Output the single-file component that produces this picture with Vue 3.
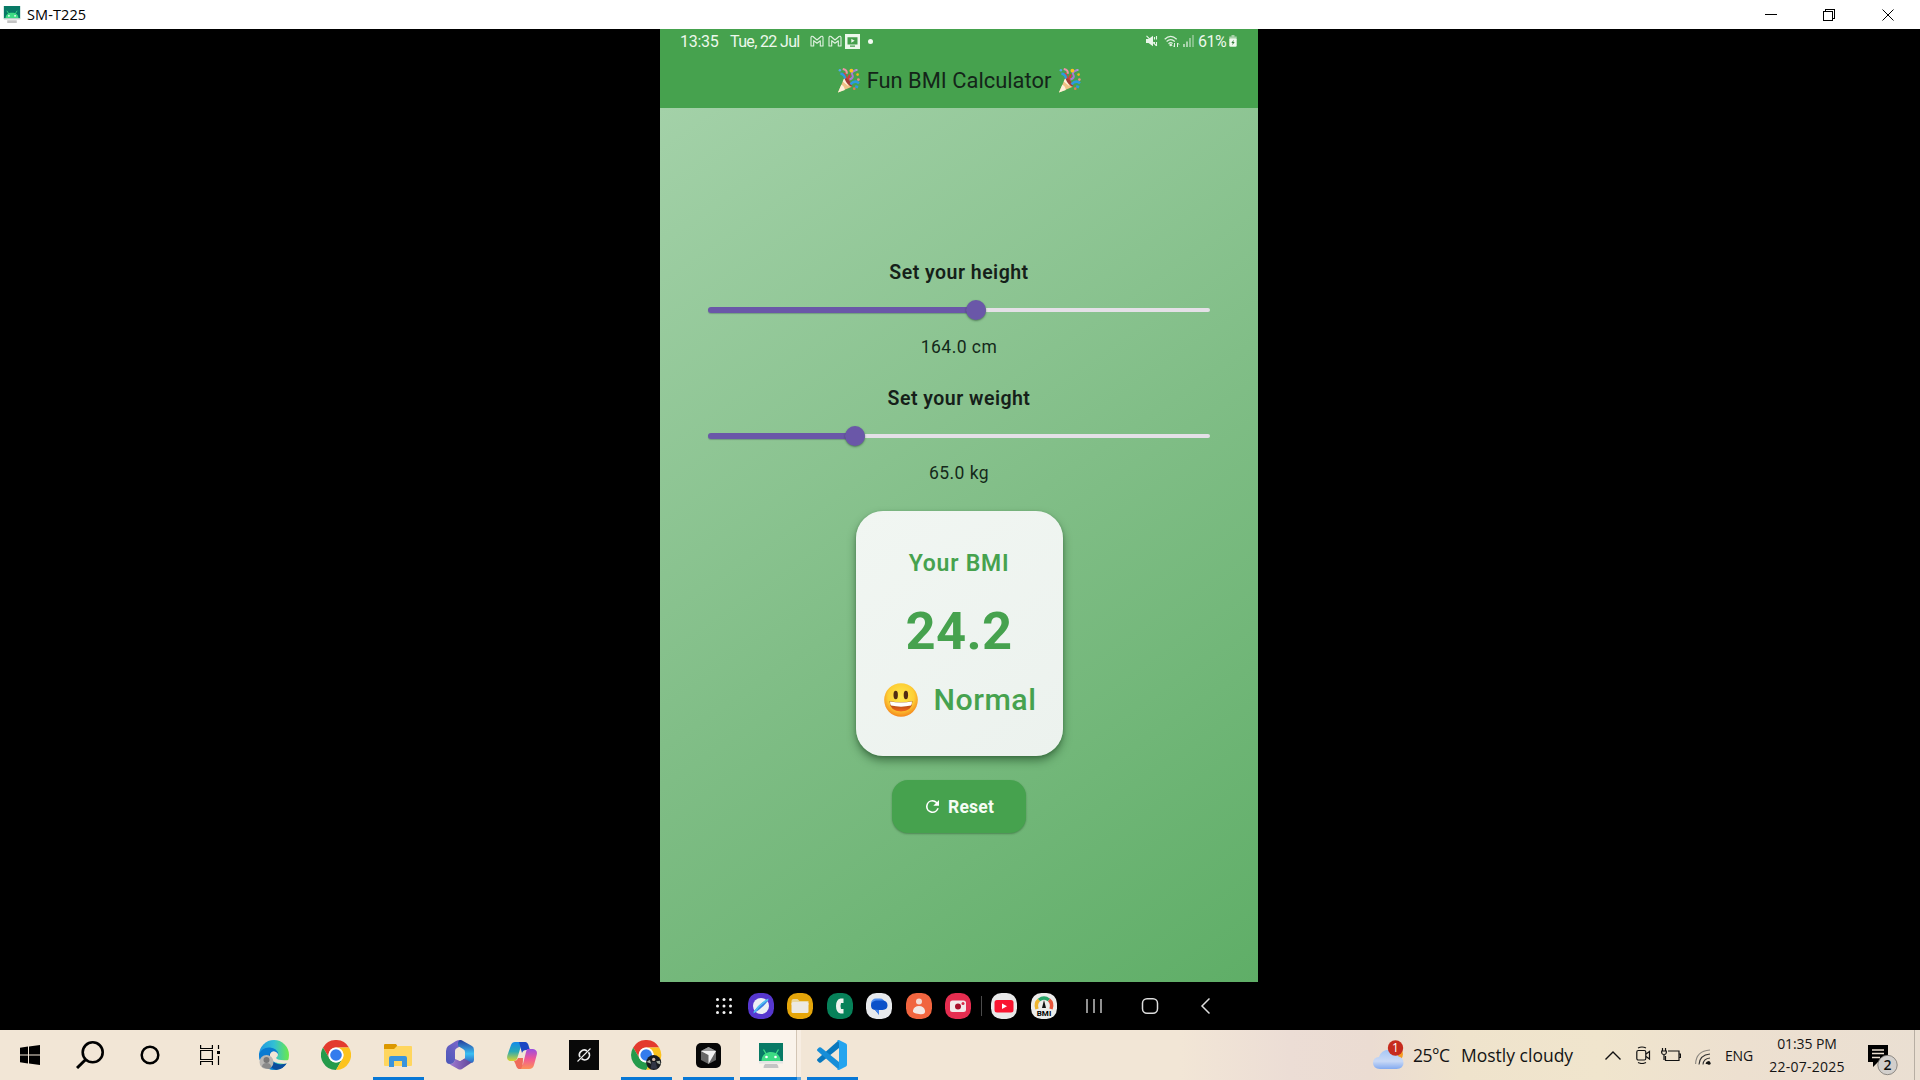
<script setup>
const sliders = [
  { label: 'Set your height', value: '164.0 cm', fill: 267.5, cls: 'height' },
  { label: 'Set your weight', value: '65.0 kg', fill: 147, cls: 'weight' },
]
</script>

<template>
  <div class="desktop">
    <header class="titlebar">
      <svg class="app-icon" width="18" height="17" viewBox="0 0 24 25">
        <path fill="#087a66" d="M0 0h24v19H0z" />
        <path fill="#3ddc84" d="M2.500 18c0-5 3.500-8 9.500-8s9.500 3 9.500 8z" />
        <path stroke="#3ddc84" stroke-width="1.300" d="M4.500 7l3 5M19.500 7l-3 5" />
        <circle cx="7.500" cy="14.500" r="1.300" fill="#fff" /><circle cx="16.500" cy="14.500" r="1.300" fill="#fff" />
        <path fill="#e4e4e4" d="M0 18h24v2.500H0z" /><path fill="#c4c4c4" d="M5 21h14v4H5z" />
      </svg>
      <span class="window-title">SM-T225</span>
      <svg class="controls" width="130" height="14" viewBox="0 0 130 14" fill="none" stroke="#000" stroke-width="1" shape-rendering="crispEdges">
        <path d="M0 6.500h12" />
        <path d="M58.500 3.500h9v9h-9zM60.500 3.500v-2h9v9h-2" />
        <path d="M117.500 1.500l11 11M128.500 1.500l-11 11" shape-rendering="auto" />
      </svg>
    </header>

    <main class="stage">
      <section class="phone">
        <div class="appbar">
          <div class="status">
            <span class="time">13:35</span>
            <span class="date">Tue, 22 Jul</span>
            <svg class="gmail" width="14" height="12" viewBox="0 0 14 12" fill="none" stroke="#e2f2e2" stroke-width="1.100" stroke-linejoin="round">
              <path d="M1 11V2.300Q1.500.8 3 1.500L7 5l4-3.500q1.500-.7 2 .8V11h-2.700V5.700L7 8.300 3.700 5.700V11z" />
            </svg>
            <svg class="gmail" width="14" height="12" viewBox="0 0 14 12" fill="none" stroke="#e2f2e2" stroke-width="1.100" stroke-linejoin="round">
              <path d="M1 11V2.300Q1.500.8 3 1.500L7 5l4-3.500q1.500-.7 2 .8V11h-2.700V5.700L7 8.300 3.700 5.700V11z" />
            </svg>
            <svg class="cast" width="15" height="15" viewBox="0 0 15 15">
              <path fill="#edf8ec" d="M0 0h15v15H0z" /><path fill="#459f4c" d="M2.500 3.200h10v7.200h-10zM5 11.500h5v1.300H5z" /><path fill="#edf8ec" d="M6.300 4.800l3.300 2-3.300 2z" />
            </svg>
            <i class="dot"></i>
            <svg class="mute" width="12" height="12" viewBox="0 0 12 12">
              <path fill="#eaf6ea" d="M0 4h2.500L7 .7v10.600L2.500 8H0z" /><path stroke="#eaf6ea" stroke-width="1.100" fill="none" d="M.5.8l10 10M8.500 2v2.500M8.500 7v2M10.500 1v3.500M10.500 7v4" />
            </svg>
            <svg class="wifi" width="16" height="13" viewBox="0 0 16 13" fill="none" stroke="#e2f2e2" stroke-width="1.200">
              <path d="M.7 4.200Q6.700-1.500 12.700 4.200M2.600 6.500Q6.700 2.700 10.800 6.500M4.500 8.700Q6.700 6.700 8.600 8.500" /><circle cx="6.700" cy="10" r=".7" fill="#e2f2e2" /><path d="M10.500 8v4M9 10.500l1.500 1.500M13.500 12V8M15 9.500L13.500 8" stroke-width="1" />
            </svg>
            <svg class="signal" width="11" height="12" viewBox="0 0 11 12" stroke="#e2f2e2" stroke-width="1.300">
              <path d="M1 12V9" /><path d="M4 12V6.500" /><path d="M7 12V3" opacity=".75" /><path d="M10 12V0" opacity=".6" />
            </svg>
            <span class="percent">61%</span>
            <svg class="cell-battery" width="8" height="12" viewBox="0 0 8 12">
              <path fill="#a8d1a9" d="M2.500 0h3v1.500h2.200V5H.3V1.500h2.200z" /><rect x=".3" y="3.500" width="7.400" height="8.300" rx="1.200" fill="#f1faf0" /><path fill="#357d3b" d="M4.700 4.800L2.300 8h1.400L3.300 10.300 5.700 7H4.300z" />
            </svg>
          </div>
          <h1 class="heading">
            <svg v-for="n in 2" :key="n" :class="'party p' + n" width="23" height="25" viewBox="0 0 24 26">
              <path fill="#f0c287" d="M1 25.500L8 9.500q6 2 7.500 10z" /><path fill="#fff0d8" d="M1 25.500l3.500-8q3 1 3.700 5.300zM6 14l2-4.500 4 9.500z" />
              <path fill="#a23b35" d="M8 8.500q4 .5 8 10.500-1.500 1.500-5-2.500-4-5-3-8z" />
              <path fill="none" stroke="#d63d3b" stroke-width="2.600" d="M9.500 11l-2-6M12 12q.5-5 2-4" />
              <path fill="none" stroke="#a77bd7" stroke-width="2.100" d="M13 12q5-2 3-5t4-5" />
              <path fill="none" stroke="#2c9ae0" stroke-width="2.600" d="M3.500 6q4 0 5 5M14 17q5-5 9-1M19 19l3 1" />
              <path fill="none" stroke="#f093a7" stroke-width="2.200" d="M6 1q5 1 4 5" />
              <circle cx="15" cy="2.700" r="2" fill="#ffc31c" /><circle cx="3" cy="2.300" r="1.300" fill="#52a7ee" /><circle cx="21.500" cy="6.800" r="1.400" fill="#f1b31d" /><circle cx="22.300" cy="12" r="1.400" fill="#ef8b91" /><circle cx="18" cy="21.500" r="1.400" fill="#df7d55" /><circle cx="20.500" cy="2" r="1.100" fill="#b59ae4" />
            </svg>
            <span>Fun BMI Calculator</span>
          </h1>
        </div>

        <div class="body">
          <div v-for="s in sliders" :key="s.label" class="field">
            <div :class="['label', s.cls]">{{ s.label }}</div>
            <div class="slider">
              <div class="active" :style="{ width: s.fill + 'px' }"></div>
              <div class="thumb"></div>
              <div class="rest"></div>
            </div>
            <div class="value">{{ s.value }}</div>
          </div>

          <div class="card">
            <div class="card-title">Your BMI</div>
            <div class="bmi">24.2</div>
            <div class="verdict">
              <svg width="34" height="34" viewBox="0 0 34 34">
                <defs>
                  <radialGradient id="face" cx=".5" cy=".4" r=".6"><stop offset="0" stop-color="#ffe94e" /><stop offset=".65" stop-color="#fdcf35" /><stop offset="1" stop-color="#f5861c" /></radialGradient>
                  <linearGradient id="mouth" x2="0" y2="1"><stop offset="0" stop-color="#8d3b12" /><stop offset="1" stop-color="#f5671f" /></linearGradient>
                </defs>
                <circle cx="17" cy="17" r="16.800" fill="url(#face)" />
                <ellipse cx="11.700" cy="12" rx="2.200" ry="4.200" fill="#512c13" /><ellipse cx="21.900" cy="12" rx="2.200" ry="4.200" fill="#512c13" />
                <path fill="url(#mouth)" d="M5.500 18.300Q17 20.500 28.500 18.300 28 28.500 17 28.500T5.500 18.300z" />
                <path fill="#fff" d="M6 18.500Q17 20.500 28 18.500q0 3-1 4-10 2.300-20 0-1-1-1-4z" />
              </svg>
              <span>Normal</span>
            </div>
          </div>

          <button class="reset">
            <svg width="13" height="13" viewBox="4 4 16 16"><path fill="#fff" d="M17.650 6.350A7.960 7.960 0 0 0 12 4a8 8 0 1 0 7.730 10h-2.080A6 6 0 1 1 12 6c1.660 0 3.140.69 4.220 1.780L13 11h7V4z" /></svg>
            <span>Reset</span>
          </button>
        </div>
      </section>

      <nav class="dock">
        <svg class="apps" width="18" height="18" viewBox="0 0 18 18" fill="#f2f2f2">
          <circle v-for="n in 9" :key="n" :cx="2.500 + ((n - 1) % 3) * 6.500" :cy="2.500 + Math.floor((n - 1) / 3) * 6.500" r="1.500" />
        </svg>
        <svg width="26" height="26" viewBox="0 0 26 26"><rect width="26" height="26" rx="10.500" fill="#5637cf" /><circle cx="13" cy="13" r="8" fill="#edf0f4" /><path d="M4.500 21Q10 11 21.500 5 17 14 4.500 21" fill="#3a7de3" /><path d="M6 19.500Q12 11 20 6.500" stroke="#53c3f2" stroke-width="1.600" fill="none" /></svg>
        <svg width="26" height="26" viewBox="0 0 26 26"><rect width="26" height="26" rx="10.500" fill="#e5a50a" /><path fill="#e9d7a0" d="M4.500 8q0-2 2-2h4l2 2h9v4h-17z" /><rect x="4.500" y="9" width="17" height="11" rx="1.500" fill="#ece9e3" /></svg>
        <svg width="26" height="26" viewBox="0 0 26 26"><rect width="26" height="26" rx="10.500" fill="#078159" /><path fill="#f0f3ef" d="M16.500 5.500v4.500h-2.500q-1 3 0 6h2.500v4.500h-3Q9 19.500 9 13t4.500-7.500z" /></svg>
        <svg width="26" height="26" viewBox="0 0 26 26"><rect width="26" height="26" rx="10.500" fill="#e7e9ec" /><rect x="5" y="5.500" width="14" height="10" rx="5" fill="#4c8df1" /><path fill="#0b51c9" d="M10 7.500h7q4.500.5 4.500 5 0 4.200-5 4.500h-3.500v4.500L9 17q-4-.5-4-4.500t5-5z" /><path fill="#4080e9" d="M9 16.500l4 .5v5z" /></svg>
        <svg width="26" height="26" viewBox="0 0 26 26"><rect width="26" height="26" rx="10.500" fill="#f1653f" /><circle cx="13" cy="8.500" r="3" fill="#f5dcd5" /><path fill="#f2e8e5" d="M7 17.500q1-4.500 6-4.500t6 4.500-6 3.500-6-3.500z" /></svg>
        <svg width="26" height="26" viewBox="0 0 26 26"><rect width="26" height="26" rx="10.500" fill="#e52d50" /><rect x="5" y="7.500" width="16" height="11.500" rx="2.500" fill="#f3e9ea" /><circle cx="13" cy="13.500" r="3" fill="#a90f2b" /><circle cx="18" cy="10.500" r="1.500" fill="#d62a47" /></svg>
        <i class="divider"></i>
        <svg width="26" height="26" viewBox="0 0 26 26"><rect width="26" height="26" rx="10.500" fill="#e9e9e9" /><rect x="3.500" y="7" width="19" height="12.500" rx="2.500" fill="#fa1530" /><path fill="#fff" d="M11 10.500l5 2.700-5 2.700z" /></svg>
        <svg width="26" height="26" viewBox="0 0 26 26"><rect width="26" height="26" rx="10.500" fill="#ededeb" /><g fill="none" stroke-width="3.500"><path d="M6 16Q4 10 8 7" stroke="#efb52f" /><path d="M8 7q5-4 10 0" stroke="#27a568" /><path d="M18 7q4 3 2 9" stroke="#e7563b" /></g><path d="M13 7l2 8h-4z" fill="#111" /><text x="13" y="22.800" text-anchor="middle" class="bmi-icon-text">BMI</text></svg>
        <svg class="keys" width="124" height="18" viewBox="0 0 124 18" fill="none" stroke="#dedede" stroke-width="1.500">
          <path d="M1 2v14M8 2v14M15 2v14" stroke-width="1.300" /><rect x="56.500" y="1.700" width="15" height="14.600" rx="4.500" /><path d="M123.500 1.500l-7.500 7.500 7.500 7.500" />
        </svg>
      </nav>
    </main>

    <footer class="taskbar">
      <div class="sys"><svg width="20" height="20" viewBox="0 0 20 20"><path d="M0 2.700L8 1.600v7.900H0zM9 1.400L20 0v9.500H9zM0 10.500h8v7.900L0 17.300zM9 10.500h11V20L9 18.600z" /></svg></div>
      <div class="sys"><svg width="28" height="28" viewBox="0 0 28 28" fill="none" stroke="#000" stroke-width="2.600"><circle cx="16.700" cy="11.300" r="10" /><path d="M9.700 18.500L1 27" stroke-width="3" /></svg></div>
      <div class="sys"><svg width="20" height="20" viewBox="0 0 20 20"><circle cx="10" cy="10" r="8.300" fill="none" stroke="#000" stroke-width="2.500" /></svg></div>
      <div class="sys"><svg width="20" height="20" viewBox="0 0 20 20" fill="none" stroke="#000" stroke-width="1.200"><path d="M.6 0v3.500h11.800V0M.6 5.500h11.800v9H.6zM.6 20v-3.500h11.800V20M18.500 0v4M18.500 11v9" /><path d="M17 6h3v3h-3z" fill="#000" stroke="none" /></svg></div>

      <div class="task first">
        <svg width="30" height="30" viewBox="0 0 30 30"><defs><linearGradient id="eg"><stop stop-color="#2096df" /><stop offset=".5" stop-color="#32bfd5" /><stop offset="1" stop-color="#6bea4a" /></linearGradient></defs><circle cx="15" cy="15" r="15" fill="url(#eg)" /><path fill="#087ad1" d="M0 14Q3 7 11 7.500q7 .5 8.500 7l-6-2Q9 17 16 23q6 3 12 0-5 8-16 6.500Q0 27 0 14z" /><path fill="#0b4d9d" d="M11 13q-1 7 5 10t12-.5Q25 29 17 30 7 27 11 13z" /><path fill="#f2e6d6" d="M11 14q2-4 6-2t0 6q2 3 13 2 0 2-2 3.500-13 1-17-5z" /><circle cx="7.500" cy="22" r="7" fill="#b8b6b3" /><circle cx="7.500" cy="20" r="3" fill="#777" /><path fill="#8a8a8a" d="M3 27q0-4 4.500-4t4.500 4-9 0" /></svg>
      </div>
      <div class="task"><svg width="30" height="30" viewBox="0 0 48 48"><path fill="#e33b2e" d="M3.200 12A24 24 0 0 1 44.800 12H24a12 12 0 0 0-10.400 18z" /><path fill="#259b4b" d="M3.200 12A24 24 0 0 0 24 48l10.400-18a12 12 0 0 1-20.800 0z" /><path fill="#fcc31e" d="M44.800 12A24 24 0 0 1 24 48l10.400-18A12 12 0 0 0 24 12z" /><circle cx="24" cy="24" r="12" fill="#fff" /><circle cx="24" cy="24" r="9.300" fill="#347ced" /></svg></div>
      <div class="task run"><svg class="folder" width="28" height="24" viewBox="0 0 28 24"><path fill="#dc9800" d="M0 1q0-1 1-1h11l2 3-3 3H0z" /><path fill="#ffd65e" d="M0 5h10l3-3h14q1 0 1 1v18q0 1-1 1H1q-1 0-1-1z" /><path fill="#3a94dc" d="M5 23V14q0-2 2-2h14q2 0 2 2v9h-5v-6h-8v6z" /></svg></div>
      <div class="task"><svg width="28" height="30" viewBox="0 0 28 30"><defs><linearGradient id="o1" x1="0" y1="1" x2="1" y2="0"><stop stop-color="#4a57b8" /><stop offset="1" stop-color="#8368cc" /></linearGradient><linearGradient id="o2" x2="0" y2="1"><stop stop-color="#253c9b" /><stop offset=".6" stop-color="#3bbff2" /><stop offset="1" stop-color="#2f62c0" /></linearGradient><linearGradient id="o3"><stop stop-color="#a97fd8" /><stop offset="1" stop-color="#5b4394" /></linearGradient></defs><path fill="url(#o3)" d="M1 22q1 3 4 2 4-1 4-5l5 2 5-3 8 2q0 2-2 3l-9 6q-2 1-4 0l-9-5q-2-1-2-2z" /><path fill="url(#o1)" d="M14 0q-2 0-4 1L2 6Q0 8 0 11v9q0 4 4 4t5-4v-9q0-2 2-3l6-3V2z" /><path fill="url(#o2)" d="M14 0q2 0 3 1l9 5q2 1 2 4v10q0 2-2 3l-7-4v-7q0-2-2-3l-5-3V3q0-2 2-3z" /><path fill="#f2e6d6" d="M14 9.500l5 3v5.500l-5 3-5-3v-5.500z" /></svg></div>
      <div class="task"><svg class="copilot" width="30" height="28" viewBox="0 0 30 28"><defs><linearGradient id="c1" x2="0" y2="1"><stop stop-color="#138bea" /><stop offset=".5" stop-color="#28a9b5" /><stop offset="1" stop-color="#dbd52e" /></linearGradient><linearGradient id="c2" x2="0" y2="1"><stop stop-color="#9a4de1" /><stop offset=".5" stop-color="#f15896" /><stop offset="1" stop-color="#fc9256" /></linearGradient></defs><path fill="url(#c1)" d="M8 1h11l-5 4-4 13q-1 2-3 2H3q-4-1-2.500-6L4 4q1-3 4-3z" /><path fill="#1b47c3" d="M12 1h6q3 0 4 5l1 3h-4q-3 0-4 3z" /><path fill="url(#c2)" d="M20 8h6q5 1 3.700 6L27 24q-1 4-5 4H11l5-5 3-12z" /><path fill="#ef6b5a" d="M11 17h5q0 8-2 11-4 1-5.500-5L7 20q3 0 4-3z" /></svg></div>
      <div class="task"><svg width="30" height="30" viewBox="0 0 30 30"><path fill="#090909" d="M0 0h30v30H0z" /><g fill="none" stroke="#eee" stroke-width="1.700"><path d="M18 11a4.800 4.800 0 0 0-7 6.200M12.500 18.700a4.800 4.800 0 0 0 7-6.500" /><path d="M8.500 21.500L21.500 8.500" stroke-width="1.100" /></g></svg></div>
      <div class="task run"><svg width="31" height="30" viewBox="0 0 49 48"><path fill="#e33b2e" d="M3.200 12A24 24 0 0 1 44.800 12H24a12 12 0 0 0-10.400 18z" /><path fill="#259b4b" d="M3.200 12A24 24 0 0 0 24 48l10.400-18a12 12 0 0 1-20.800 0z" /><path fill="#fcc31e" d="M44.800 12A24 24 0 0 1 24 48l10.400-18A12 12 0 0 0 24 12z" /><circle cx="24" cy="24" r="12" fill="#fff" /><circle cx="24" cy="24" r="9.300" fill="#347ced" /><circle cx="36" cy="36" r="12" fill="#191b1f" /><path fill="#a7afa2" d="M25 35q2-2 5-3l2 6zM40 34l6-1 1 6-5-2z" /><circle cx="36" cy="31" r="2.700" fill="#d2b7a6" /><path fill="#323645" d="M31 46l2-11h6l3 11z" /></svg></div>
      <div class="task run"><svg width="25" height="25" viewBox="0 0 25 25"><rect width="25" height="25" rx="5" fill="#070707" /><path fill="#666" d="M12.500 4l7.500 4v9l-7.500 4L5 17V8z" /><path fill="#999" d="M5 8l7.500-4L20 8l-7.500 4z" /><path fill="#f2f2f2" d="M5 8h15l-7.500 13v-9z" /></svg></div>
      <div class="task current"><svg width="24" height="25" viewBox="0 0 24 25">
        <path fill="#087a66" d="M0 0h24v19H0z" /><path fill="#3ddc84" d="M2.500 18c0-5 3.500-9 9.500-9s9.500 4 9.500 9z" /><path stroke="#3ddc84" stroke-width="1.300" d="M4.500 6.500l3 5M19.500 6.500l-3 5" /><circle cx="7.500" cy="14" r="1.300" fill="#fff" /><circle cx="16.500" cy="14" r="1.300" fill="#fff" /><path fill="#e4e4e4" d="M0 18h24v2.500H0z" /><path fill="#c4c4c4" d="M6 21h12q1.500 1.500 1.500 4h-15Q4.500 22.500 6 21z" />
      </svg></div>
      <div class="task run"><svg width="30" height="30" viewBox="0 0 30 30"><path fill="#0878be" d="M22 0v8L4 22.500q-1 .7-2 0L.5 21q-1-1 0-2z" /><path fill="#168ed8" d="M22 30v-8L4 7.500q-1-.7-2 0L.5 9q-1 1 0 2z" /><path fill="#24a4ef" d="M22 0l7 3.500q1 .5 1 2v19q0 1.500-1 2L22 30q-1.500 0-2-1 2 0 2-2V3q0-2-2-2 .5-1 2-1z" /></svg></div>

      <div class="tray">
        <svg class="weather" width="31" height="30" viewBox="0 0 31 30"><defs><linearGradient id="cl" x2="0" y2="1"><stop stop-color="#a5c6f5" /><stop offset=".6" stop-color="#c9d9f6" /><stop offset="1" stop-color="#83aaf0" /></linearGradient></defs><circle cx="23" cy="14" r="7" fill="#f59b21" /><path fill="url(#cl)" d="M7 29q-7-.5-7-6t6-6q2-7 10-7.500t9.500 7q5 1 5 6.500t-7 6z" /><circle cx="22.500" cy="8" r="7.700" fill="#c62b1e" /><text x="22.500" y="12.300" text-anchor="middle" class="alert-text">1</text></svg>
        <span class="temp">25°C</span><span class="cloudy">Mostly cloudy</span>
        <svg class="caret" width="16" height="9" viewBox="0 0 16 9" fill="none" stroke="#111" stroke-width="1.400"><path d="M.5 8.500L8 1l7.500 7.500" /></svg>
        <svg class="cam" width="15" height="18" viewBox="0 0 15 18" fill="none" stroke="#111" stroke-width="1.200"><rect x=".8" y="4.500" width="9" height="9.500" rx="1.500" /><path d="M10 8l3.500-2.500v7.500L10 10.500M2 2Q6 0 10 2M2 16.500q4 2 8 0" /></svg>
        <svg class="battery" width="20" height="14" viewBox="0 0 20 14" fill="none" stroke="#111" stroke-width="1.200"><path d="M7 3h11v9.500H4.500V8M18.500 6h1v3.500h-1M1.500 0v3M4.500 0v3M.7 3h4.600v2Q5 6.500 3 6.500T.7 5zM3 6.500V12" /></svg>
        <svg class="net" width="16" height="16" viewBox="0 0 16 16" fill="none" stroke="#333" stroke-width="1.100"><path d="M.6 15Q1 2 15 1" stroke="#8b8780" /><path d="M4 15.500Q4.500 6 15 5M8 15.500Q8.500 9.500 15 9" /><path d="M11.500 15q.5-2 3-2" stroke="#111" stroke-width="2" /><circle cx="14" cy="14.200" r="1.600" fill="#111" stroke="none" /></svg>
        <span class="lang">ENG</span>
        <div class="clock"><span class="hour">01:35 PM</span><span class="day">22-07-2025</span></div>
        <svg class="notice" width="31" height="32" viewBox="0 0 31 32"><path d="M0 0h20v17H10l-5 5v-5H0z" /><path stroke="#eee2d2" stroke-width="1.300" d="M4 5h12M4 8.500h12M4 12.500h8" /><circle cx="19.500" cy="20" r="9.700" fill="#d2cfcc" stroke="#77736e" stroke-width=".8" /><text x="19.500" y="25.300" text-anchor="middle" class="count-text">2</text></svg>
        <i class="peek"></i>
      </div>
    </footer>
  </div>
</template>

<style>
body { margin: 0; overflow: hidden; background: #000; }
</style>

<style scoped>
* { box-sizing: border-box; }
.desktop { width: 1920px; height: 1080px; display: flex; flex-direction: column; background: #000; font-family: "Open Sans", "Noto Sans", sans-serif; color: #111; }
svg { display: block; flex: none; }
span { white-space: nowrap; }
.titlebar { height: 29px; flex: none; background: #fff; display: flex; align-items: center; }
.app-icon { margin-left: 3px; }
.window-title { margin-left: 6px; font-size: 14.500px; letter-spacing: .1px; color: #000; }
.controls { margin-left: auto; margin-right: 25px; }
.stage { height: 1001px; flex: none; display: flex; flex-direction: column; align-items: center; background: #000; }
.phone { width: 598px; height: 953px; margin-right: 2px; flex: none; display: flex; flex-direction: column; font-family: Roboto, sans-serif; }
.appbar { height: 79px; flex: none; background: #46a24e; }
.status { height: 24px; display: flex; align-items: center; color: #edf8ec; font-size: 16px; font-family: Roboto, sans-serif; }
.time { margin-left: 20px; width: 50px; letter-spacing: -.3px; }
.date { width: 80px; letter-spacing: -.65px; }
.gmail { margin-right: 4px; }
.cast { margin-left: -1px; }
.dot { width: 5px; height: 5px; border-radius: 50%; background: #f4fbf3; margin-left: 8px; margin-right: auto; }
.wifi { margin-left: 6px; }
.signal { margin-left: 3px; }
.percent { margin-left: 4px; width: 30px; letter-spacing: -.5px; }
.cell-battery { margin-left: 1px; margin-right: 21px; }
.heading { margin: 0; height: 55px; display: flex; align-items: center; justify-content: center; gap: 7px; font-size: 21.900px; font-weight: 400; color: #142519; }
.heading .p1 { order: 0; }
.heading span { order: 1; }
.heading .p2 { order: 2; }
.body { flex: 1; display: flex; flex-direction: column; align-items: center; padding-top: 150px; background: linear-gradient(145.700deg, #a3d1a8 0%, #81be87 50%, #5fae67 100%); }
.field { width: 502px; height: 126px; flex: none; display: flex; flex-direction: column; align-items: center; }
.label { height: 28px; line-height: 30px; font-size: 19.500px; font-weight: 600; letter-spacing: .48px; color: #152019; }
.slider { width: 502px; height: 20px; margin-top: 14px; display: flex; align-items: center; }
.active { height: 6px; flex: none; border-radius: 3px 0 0 3px; background: #6a57a8; margin-right: -10px; box-shadow: 0 1px 1px rgba(40, 60, 70, .3); }
.thumb { width: 20px; height: 20px; flex: none; border-radius: 50%; background: #6a57a8; box-shadow: 0 1px 2px rgba(20, 50, 30, .5); z-index: 1; }
.rest { height: 4px; flex: 1; border-radius: 0 2px 2px 0; background: #e4e0e7; }
.value { height: 24px; line-height: 25px; margin-top: 15px; font-size: 17.500px; letter-spacing: .45px; color: #14291a; }
.card { width: 207px; height: 245px; flex: none; margin-top: 1px; border-radius: 27px; background: linear-gradient(145deg, #f1f6f2, #ecf2ee); box-shadow: 0 5px 9px rgba(20, 60, 25, .5), 0 1px 3px rgba(20, 60, 25, .25); display: flex; flex-direction: column; align-items: center; color: #46a24e; }
.card-title { margin-top: 39px; height: 28px; line-height: 28px; font-size: 23px; font-weight: 600; letter-spacing: .75px; }
.bmi { margin-top: 21px; height: 64px; line-height: 64px; font-size: 52.500px; font-weight: 700; letter-spacing: .3px; }
.verdict { margin-top: 16px; height: 42px; padding-left: 2px; display: flex; align-items: center; gap: 16px; font-size: 30.300px; line-height: 40px; font-weight: 500; letter-spacing: .5px; }
.verdict span { margin-top: -1px; }
.reset { width: 134px; height: 53px; margin-top: 24px; padding: 0 0 0 2px; border: 0; border-radius: 16px; background: #46a24e; display: flex; align-items: center; justify-content: center; gap: 9px; font: 700 17.500px Roboto, sans-serif; letter-spacing: .2px; color: #f5fcf4; box-shadow: 0 1px 2px rgba(20, 60, 25, .4); }
.dock { width: 600px; height: 48px; flex: none; display: flex; align-items: center; gap: 13.500px; padding-left: 55px; }
.apps { margin-right: 1px; }
.divider { width: 1px; height: 20px; background: #4b4b4b; margin: 0 -4px 0 -4px; }
.bmi-icon-text { font: 700 8px Roboto, sans-serif; fill: #000; }
.keys { margin-left: 16px; }
.taskbar { height: 50px; flex: none; display: flex; background: linear-gradient(90deg, #f2e6d6 0, #f2e6d6 1180px, #ecddd5 1290px, #ebdcd2 1370px, #efe3cc 1460px, #f0e5cd 1600px, #ede0d0 1740px, #eadfd2 1920px); }
.sys { width: 60px; display: flex; align-items: center; justify-content: center; }
.task { width: 62px; display: flex; align-items: center; justify-content: center; }
.task.first { margin-left: 3px; }
.run { background: linear-gradient(#0878d6, #0878d6) center bottom / 51px 3px no-repeat; }
.current { width: 61px; margin: 0 0 0 1px; background: linear-gradient(#0878d6, #0878d6) left bottom / 57px 3px no-repeat, linear-gradient(#5ea5df, #5ea5df) right bottom / 4px 3px no-repeat, linear-gradient(90deg, #faf3eb 0 56px, #d3c5b5 56px 57px, #f7ede2 57px); }
.folder { margin-top: 2px; }
.tray { margin-left: auto; height: 50px; display: flex; align-items: center; color: #141414; }
.temp { margin-left: 9px; width: 48px; font-size: 17.500px; letter-spacing: -.5px; }
.cloudy { width: 113px; font-size: 17.500px; letter-spacing: 0; }
.caret { margin-left: 31px; }
.cam { margin-left: 15px; }
.battery { margin-left: 10px; }
.net { margin-left: 14px; margin-top: 4px; }
.lang { margin-left: 14px; width: 29px; font-size: 14px; letter-spacing: -.2px; }
.clock { margin-left: 15px; width: 76px; display: flex; flex-direction: column; align-items: center; font-size: 14px; line-height: 23px; }
.hour { letter-spacing: -.1px; }
.day { letter-spacing: .25px; }
.notice { margin-left: 23px; margin-top: 12px; }
.peek { width: 1px; height: 50px; margin-left: 15px; margin-right: 5px; background: #b7aea3; }
.alert-text { font: 12px "Open Sans", sans-serif; fill: #fff; }
.count-text { font: 600 14px "Open Sans", sans-serif; fill: #111; }
</style>
